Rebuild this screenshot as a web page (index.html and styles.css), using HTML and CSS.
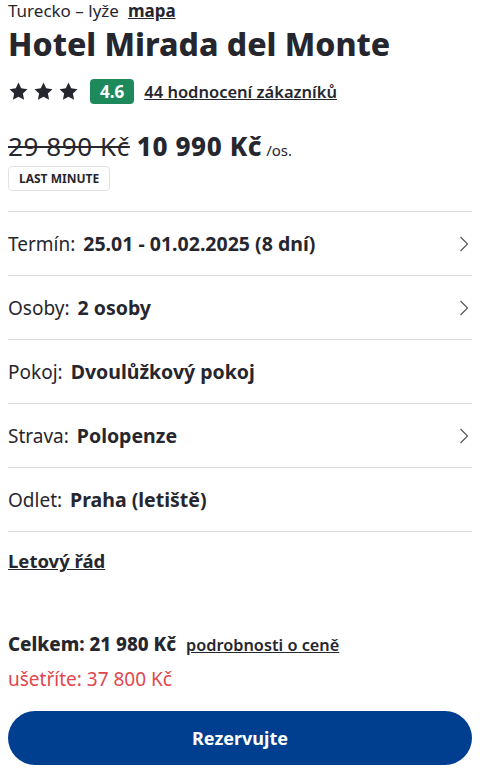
FILE: index.html
```html
<!DOCTYPE html>
<html lang="cs">
<head>
    <meta charset="UTF-8">
    <meta name="viewport" content="width=device-width, initial-scale=1.0">
    <title>Hotel Mirada del Monte</title>
    <link rel="stylesheet" href="styles.css">
</head>
<body>
    <div class="page">
        <div class="location">
            <span>Turecko – lyže</span>
            <a href="#" class="map-link">mapa</a>
        </div>
        <h1>Hotel Mirada del Monte</h1>

        <div class="rating">
            <div class="stars">
                <svg viewBox="0 0 24 24"><path d="M12 1.8l3.1 6.6 7.2.9-5.3 5 1.4 7.1L12 17.9l-6.4 3.5 1.4-7.1-5.3-5 7.2-.9z"/></svg>
                <svg viewBox="0 0 24 24"><path d="M12 1.8l3.1 6.6 7.2.9-5.3 5 1.4 7.1L12 17.9l-6.4 3.5 1.4-7.1-5.3-5 7.2-.9z"/></svg>
                <svg viewBox="0 0 24 24"><path d="M12 1.8l3.1 6.6 7.2.9-5.3 5 1.4 7.1L12 17.9l-6.4 3.5 1.4-7.1-5.3-5 7.2-.9z"/></svg>
            </div>
            <span class="score">4.6</span>
            <a href="#" class="reviews">44 hodnocení zákazníků</a>
        </div>

        <div class="price">
            <span class="old-price">29 890 Kč</span>
            <span class="new-price">10 990 Kč</span>
            <span class="per">/os.</span>
        </div>
        <span class="tag">LAST MINUTE</span>

        <ul class="options">
            <li class="option">
                <span class="label">Termín:</span>
                <strong>25.01 - 01.02.2025 (8 dní)</strong>
                <svg class="chevron" viewBox="0 0 10 16"><path d="M1.5 1l7 7-7 7"/></svg>
            </li>
            <li class="option">
                <span class="label">Osoby:</span>
                <strong>2 osoby</strong>
                <svg class="chevron" viewBox="0 0 10 16"><path d="M1.5 1l7 7-7 7"/></svg>
            </li>
            <li class="option">
                <span class="label">Pokoj:</span>
                <strong>Dvoulůžkový pokoj</strong>
            </li>
            <li class="option">
                <span class="label">Strava:</span>
                <strong>Polopenze</strong>
                <svg class="chevron" viewBox="0 0 10 16"><path d="M1.5 1l7 7-7 7"/></svg>
            </li>
            <li class="option">
                <span class="label">Odlet:</span>
                <strong>Praha (letiště)</strong>
            </li>
        </ul>

        <a href="#" class="schedule">Letový řád</a>

        <div class="total">
            <strong>Celkem: 21 980 Kč</strong>
            <a href="#" class="details">podrobnosti o ceně</a>
        </div>
        <div class="saving">ušetříte: 37 800 Kč</div>

        <button type="button" class="book">Rezervujte</button>
    </div>
</body>
</html>
```

FILE: styles.css
```css
body {
    margin: 0;
    font-family: "Noto Sans", Arial, sans-serif;
    color: #26262e;
    background-color: #fff;
}

.page {
    padding: 1px 8px 0;
    display: flex;
    flex-direction: column;
    align-items: flex-start;
}

a {
    color: #26262e;
}

.location {
    font-size: 17px;
    line-height: 20px;
    display: flex;
    gap: 9px;
}

.map-link {
    font-weight: 700;
}

h1 {
    margin: 3px 0 0;
    font-size: 32px;
    line-height: 40px;
    font-weight: 800;
}

.rating {
    margin-top: 15px;
    display: flex;
    align-items: center;
}

.stars {
    display: flex;
    gap: 4px;
}

.stars svg {
    width: 21px;
    height: 21px;
    fill: #26262e;
}

.score {
    margin-left: 11px;
    background-color: #1e8a5c;
    color: #fff;
    font-size: 17px;
    font-weight: 700;
    line-height: 25px;
    padding: 0 10px;
    border-radius: 4px;
}

.reviews {
    margin-left: 10px;
    font-size: 16.5px;
    font-weight: 600;
}

.price {
    margin-top: 26px;
    height: 32px;
    display: flex;
    align-items: baseline;
    line-height: 32px;
}

.old-price {
    font-size: 26px;
    letter-spacing: 0.6px;
    text-decoration: line-through;
    text-decoration-thickness: 2px;
}

.new-price {
    margin-left: 7px;
    font-size: 26px;
    font-weight: 800;
    letter-spacing: 0.6px;
}

.per {
    margin-left: 4px;
    font-size: 15px;
}

.tag {
    margin-top: 4px;
    font-size: 12px;
    font-weight: 700;
    line-height: 23px;
    padding: 0 10px;
    border: 1px solid #e2e2e6;
    border-radius: 4px;
}

.options {
    list-style: none;
    margin: 20px 0 0;
    padding: 0;
    align-self: stretch;
    border-top: 1px solid #dcdcdf;
}

.option {
    height: 63px;
    border-bottom: 1px solid #dcdcdf;
    display: flex;
    align-items: center;
    gap: 8px;
    font-size: 19px;
}

.option strong {
    font-size: 19.5px;
    font-weight: 700;
}

.chevron {
    margin-left: auto;
    margin-right: 3px;
    width: 10px;
    height: 16px;
    fill: none;
    stroke: #55555c;
    stroke-width: 1.2;
}

.schedule {
    margin-top: 17px;
    font-size: 18.5px;
    line-height: 24px;
    font-weight: 700;
}

.total {
    margin-top: 59px;
    height: 24px;
    display: flex;
    align-items: baseline;
    gap: 10px;
    line-height: 24px;
}

.total strong {
    font-size: 18.8px;
    font-weight: 800;
}

.details {
    font-size: 16.3px;
    font-weight: 600;
}

.saving {
    margin-top: 11px;
    font-size: 19px;
    line-height: 24px;
    color: #e0474e;
}

.book {
    margin-top: 20px;
    align-self: stretch;
    height: 54px;
    border: none;
    border-radius: 27px;
    background-color: #003f8f;
    color: #fff;
    font-family: inherit;
    font-size: 18px;
    font-weight: 700;
    cursor: pointer;
}
```
